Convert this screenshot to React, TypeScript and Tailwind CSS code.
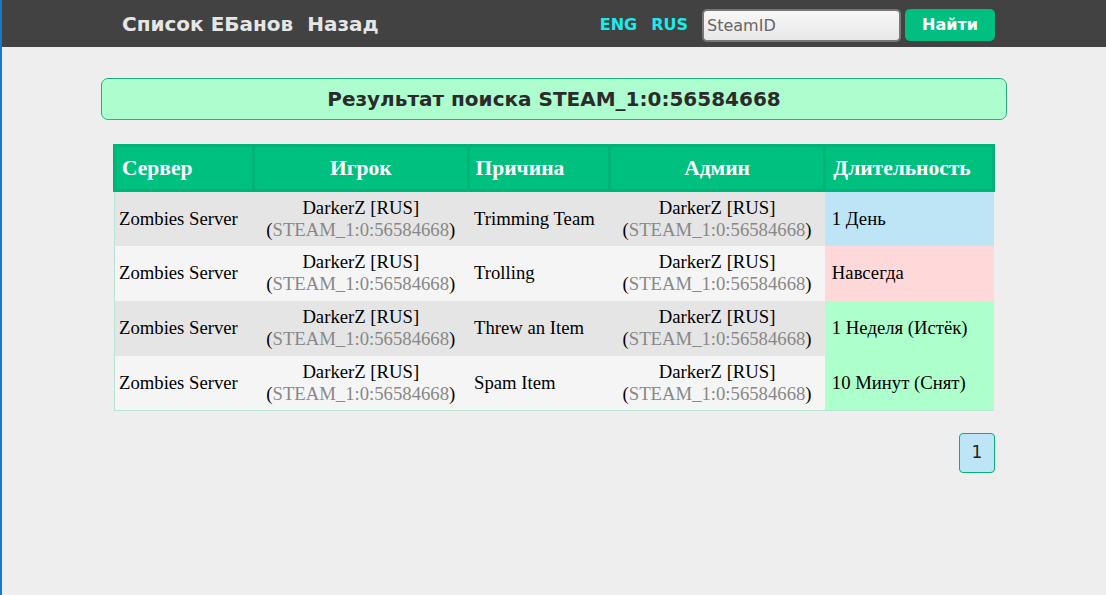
const bans = [
  { reason: "Trimming Team", length: "1 День", tone: "bg-[#bde5f6]" },
  { reason: "Trolling", length: "Навсегда", tone: "bg-[#ffd9d9]" },
  { reason: "Threw an Item", length: "1 Неделя (Истёк)", tone: "bg-[#adffcc]" },
  { reason: "Spam Item", length: "10 Минут (Снят)", tone: "bg-[#adffcc]" },
];

const Player = () => (
  <div className="leading-[22px]">
    <div>DarkerZ [RUS]</div>
    <div>
      (<span className="text-[#888]">STEAM_1:0:56584668</span>)
    </div>
  </div>
);

export default function App() {
  return (
    <div className="min-h-[595px] bg-[#eeeeee] border-l-2 border-[#1a78cf] font-['DejaVu_Sans',sans-serif]">
      {/* top bar */}
      <div className="h-[47px] bg-[#424242] flex items-center pl-[120px] pr-[111px]">
        <a className="text-[#e6e6e6] font-bold text-[20px] mr-[14px]">Список ЕБанов</a>
        <a className="text-[#e6e6e6] font-bold text-[20px]">Назад</a>
        <div className="ml-auto flex items-center pt-[3px]">
          <span className="text-[#1deaea] font-bold text-[16px] mr-[14px]">ENG</span>
          <span className="text-[#1deaea] font-bold text-[16px] mr-[14px]">RUS</span>
          <input
            placeholder="SteamID"
            className="w-[199px] h-[33px] px-[3px] rounded-[5px] border-2 border-[#777] bg-gradient-to-b from-[#f7f7f7] to-[#e8e8e8] text-[16px] placeholder:text-[#666] outline-none"
          />
          <button className="ml-[4px] w-[90px] h-[32px] rounded-[5px] bg-[#00bf80] text-white font-bold text-[16px]">
            Найти
          </button>
        </div>
      </div>

      <div className="w-[906px] mx-auto pt-[31px]">
        <div className="h-[42px] rounded-[7px] border border-[#1db37a] bg-[#adfdcf] flex items-center justify-center text-[#2b2b2b] font-bold text-[20px]">
          Результат поиска STEAM_1:0:56584668
        </div>

        <table className="mt-[24px] mx-auto w-[882px] border-collapse font-['Liberation_Serif',serif] text-[18.7px] text-black">
          <thead>
            <tr className="bg-[#00c080] text-white text-[21.5px]">
              <th className="w-[140px] h-[45px] border-[3px] border-[#00b377] text-left pl-[6px]">Сервер</th>
              <th className="w-[215px] border-[3px] border-[#00b377]">Игрок</th>
              <th className="w-[142px] border-[3px] border-[#00b377] text-left pl-[6px]">Причина</th>
              <th className="w-[216px] border-[3px] border-[#00b377]">Админ</th>
              <th className="w-[169px] border-[3px] border-[#00b377] text-left pl-[7px]">Длительность</th>
            </tr>
          </thead>
          <tbody className="border-l border-b border-[#b6e6d2]">
            {bans.map((b, i) => (
              <tr key={i} className={i % 2 === 0 ? "bg-[#e5e5e5]" : "bg-[#f5f5f5]"}>
                <td className="h-[55px] pl-[4px]">Zombies Server</td>
                <td className="text-center">
                  <Player />
                </td>
                <td className="pl-[6px]">{b.reason}</td>
                <td className="text-center">
                  <Player />
                </td>
                <td className={`pl-[7px] ${b.tone}`}>{b.length}</td>
              </tr>
            ))}
          </tbody>
        </table>

        <div className="w-[882px] mx-auto flex justify-end mt-[22px]">
          <div className="w-[36px] h-[40px] rounded-[4px] border border-[#00b377] bg-[#bde5f6] flex items-center justify-center text-[17px] text-[#222]">
            1
          </div>
        </div>
      </div>
    </div>
  );
}
